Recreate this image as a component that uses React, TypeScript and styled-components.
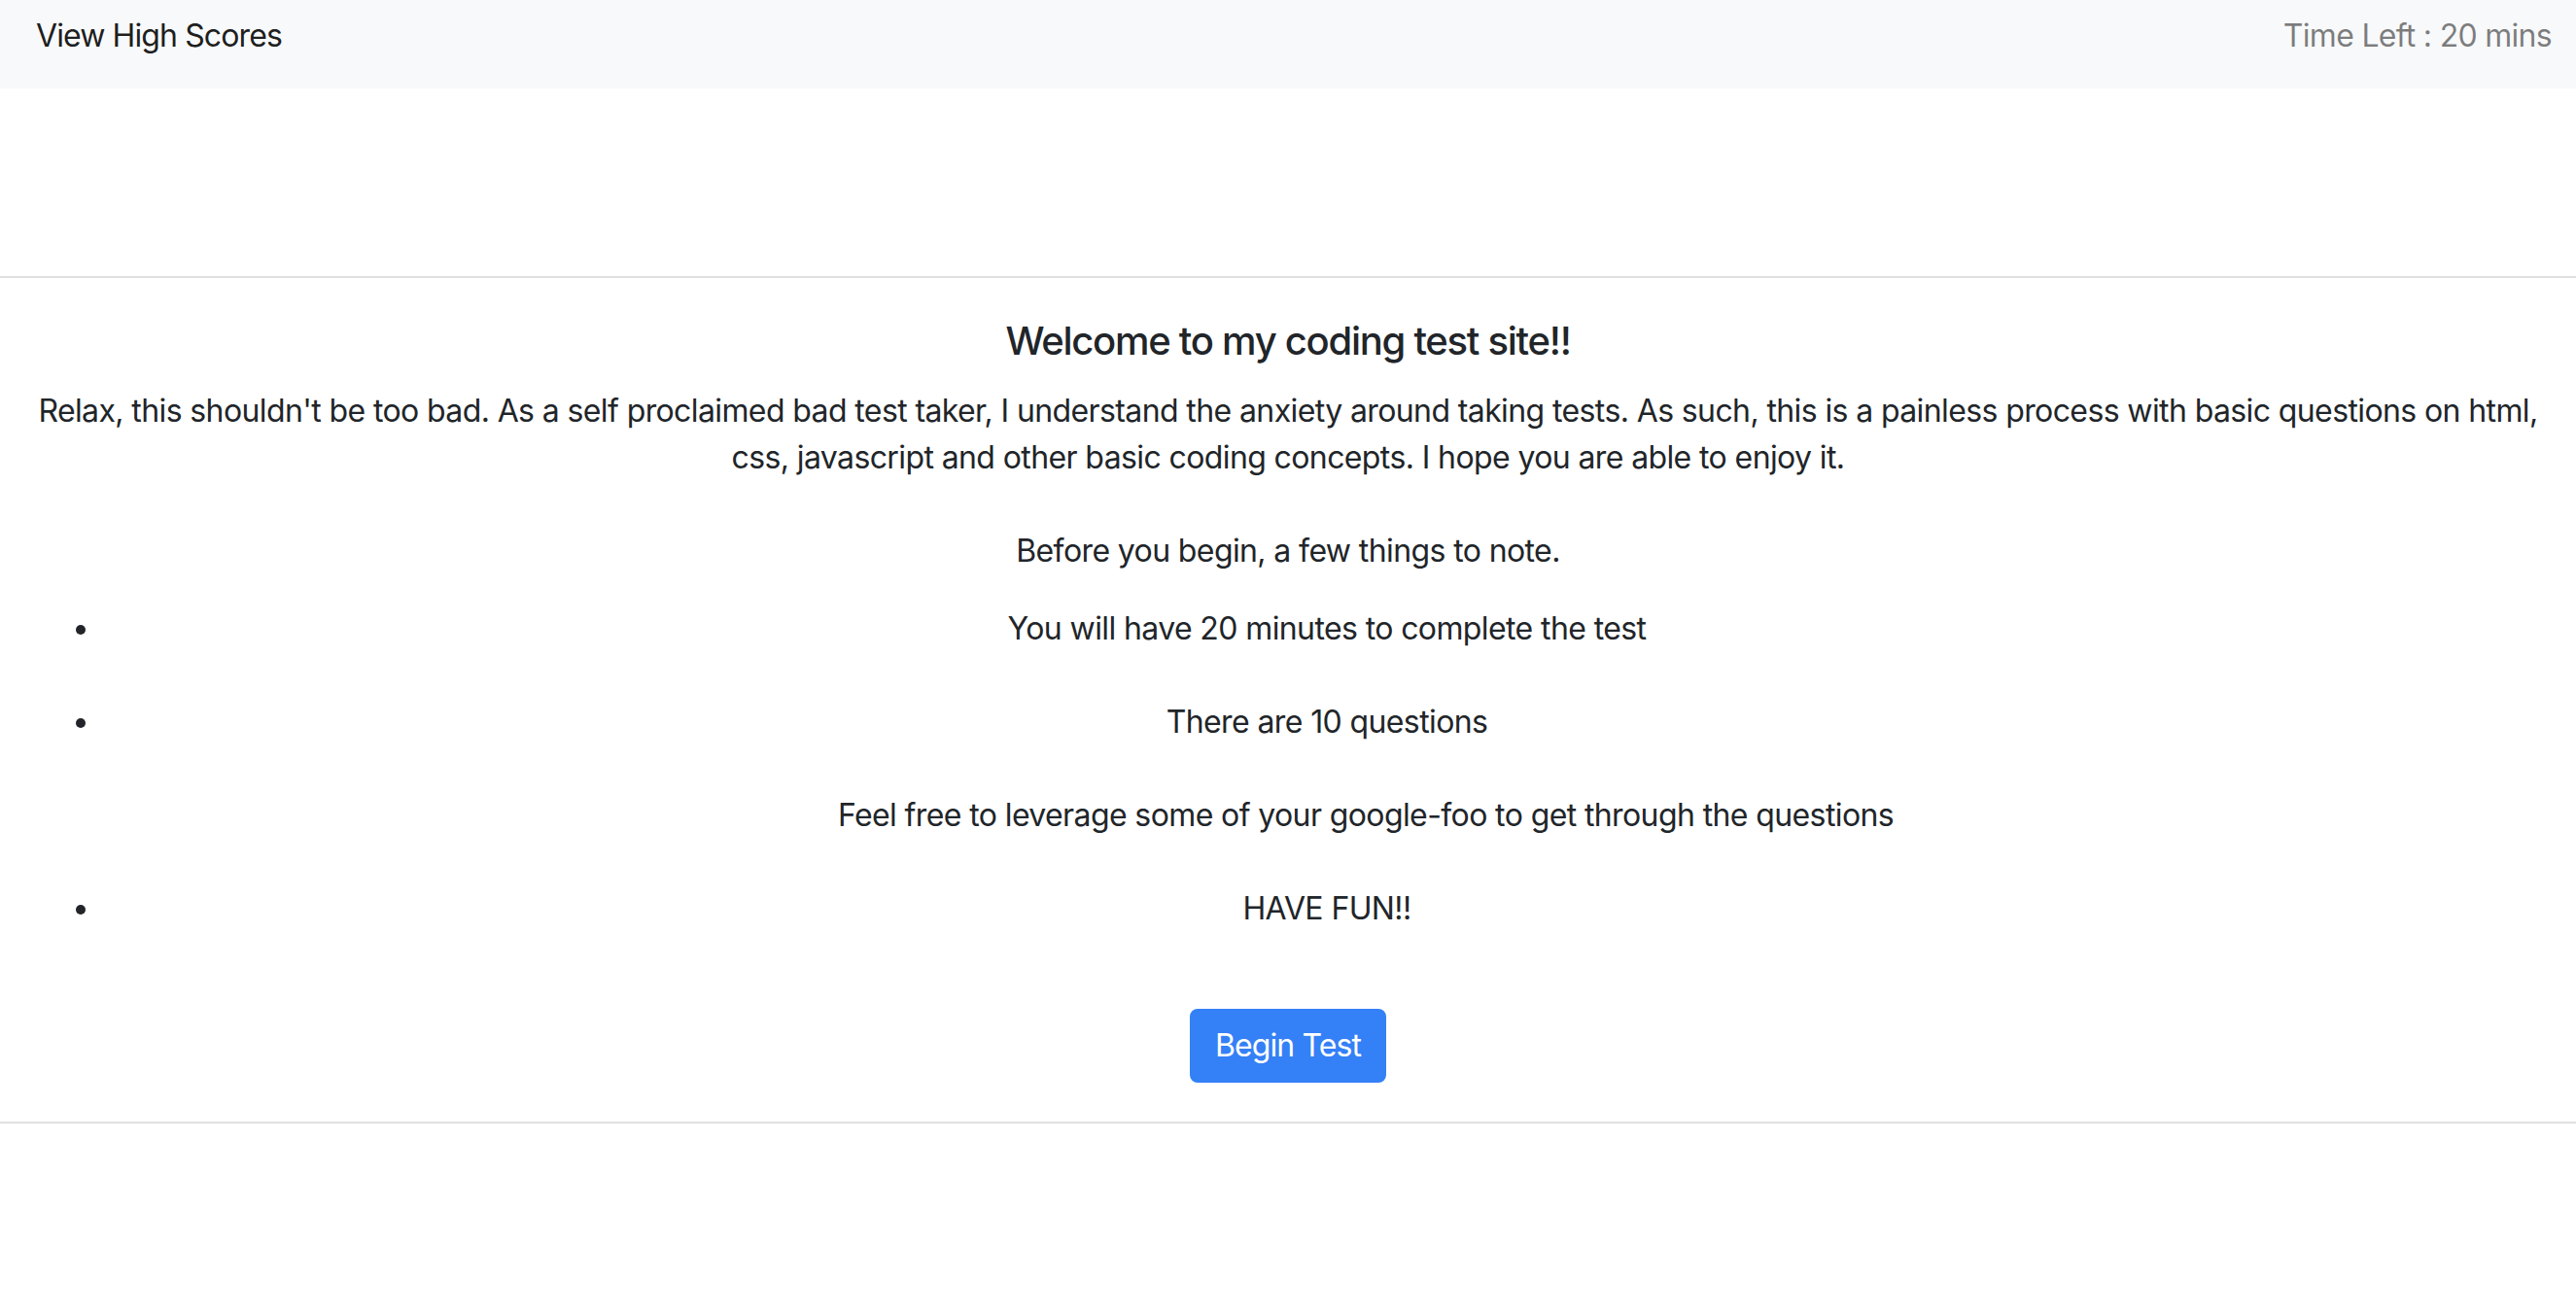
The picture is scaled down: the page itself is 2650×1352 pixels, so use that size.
import React from "react";
import styled, { createGlobalStyle } from "styled-components";

const GlobalStyle = createGlobalStyle`
  html, body {
    margin: 0;
    padding: 0;
    background: #ffffff;
  }
  body {
    font-family: Inter, "Noto Sans", "Liberation Sans", sans-serif;
    color: #212529;
    font-size: 32px;
    line-height: 48px;
    letter-spacing: -0.019em;
  }
  * { box-sizing: border-box; }
`;

const Navbar = styled.nav`
  display: flex;
  justify-content: space-between;
  align-items: flex-start;
  height: 91px;
  padding: 13px 25px 0 37px;
  background: #f8f9fa;
  font-size: 32px;
  line-height: 48px;
`;

const Brand = styled.a`
  color: rgba(0, 0, 0, 0.9);
  text-decoration: none;
  letter-spacing: -0.028em;
  cursor: pointer;
`;

const Timer = styled.span`
  color: rgba(0, 0, 0, 0.5);
  letter-spacing: -0.022em;
`;

const Panel = styled.section`
  margin-top: 193px;
  border-top: 2px solid rgba(0, 0, 0, 0.12);
  border-bottom: 2px solid rgba(0, 0, 0, 0.12);
  padding: 41px 30px 40px;
  text-align: center;
`;

const Title = styled.h5`
  margin: 0 0 24px;
  font-size: 40px;
  line-height: 48px;
  font-weight: 500;
  letter-spacing: -0.032em;
`;

const Intro = styled.p`
  margin: 0 0 32px;
`;

const List = styled.ul`
  display: flex;
  flex-direction: column;
  gap: 48px;
  margin: 0 0 79px;
  padding: 0 0 0 75px;
  list-style: disc;
`;

const Item = styled.li<{ $nested?: boolean }>`
  line-height: 48px;
  padding-left: ${(p) => (p.$nested ? "85px" : "5px")};
  list-style: ${(p) => (p.$nested ? "none" : "disc")};
`;

const BeginButton = styled.button`
  display: inline-block;
  height: 76px;
  padding: 12px 24px;
  font-family: inherit;
  font-size: 32px;
  line-height: 48px;
  letter-spacing: -0.028em;
  color: #ffffff;
  background: #3480f6;
  border: 2px solid #3480f6;
  border-radius: 8px;
  cursor: pointer;
`;

export default function App() {
  return (
    <>
      <GlobalStyle />
      <Navbar>
        <Brand>View High Scores</Brand>
        <Timer>Time Left : 20 mins</Timer>
      </Navbar>
      <Panel>
        <Title>Welcome to my coding test site!!</Title>
        <Intro>
          Relax, this shouldn't be too bad. As a self proclaimed bad test taker, I understand the
          anxiety around taking tests. As such, this is a painless process with basic questions on
          html, css, javascript and other basic coding concepts. I hope you are able to enjoy it.
          <br />
          <br />
          Before you begin, a few things to note.
        </Intro>
        <List>
          <Item>You will have 20 minutes to complete the test</Item>
          <Item>There are 10 questions</Item>
          <Item $nested>Feel free to leverage some of your google-foo to get through the questions</Item>
          <Item>HAVE FUN!!</Item>
        </List>
        <BeginButton>Begin Test</BeginButton>
      </Panel>
    </>
  );
}
